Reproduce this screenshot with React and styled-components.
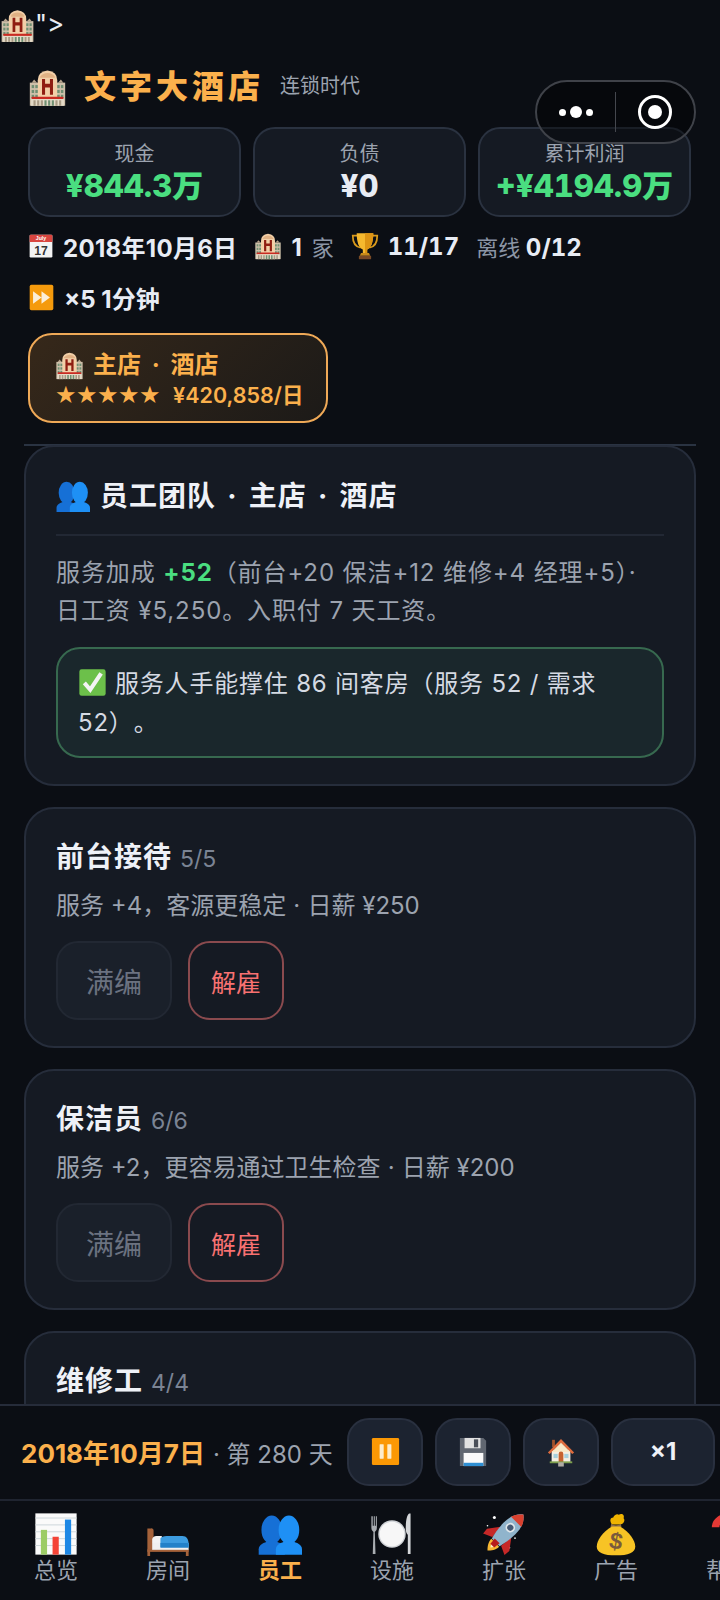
import React from "react";
import styled, { createGlobalStyle } from "styled-components";

const Global = createGlobalStyle`
  html, body { margin: 0; padding: 0; background: #0b0e14; }
  * { box-sizing: border-box; }
  body { font-family: Inter, "Noto Sans CJK SC", "Noto Sans", sans-serif; color: #e8ecf4; }
`;

const Page = styled.div`
  position: relative;
  width: 720px;
  height: 1600px;
  overflow: hidden;
  display: flex;
  flex-direction: column;
  background: #0b0e14;
`;
const Scroll = styled.main`
  flex: 1;
  min-height: 0;
  overflow: hidden;
`;
const Stray = styled.div`
  height: 46px;
  padding-top: 8px;
  display: flex;
  align-items: flex-start;
  font-size: 26px;
  line-height: 32px;
  color: #e8ecf4;
`;
const Header = styled.header`
  padding: 23px 28px 0;
`;
const TitleRow = styled.div`
  display: flex;
  align-items: center;
  height: 36px;
`;
const Title = styled.h1`
  margin: 0 0 0 17px;
  font-size: 32px;
  line-height: 36px;
  font-weight: 900;
  letter-spacing: 4px;
  color: #fbb04c;
`;
const Subtitle = styled.span`
  margin-left: 16px;
  font-size: 20px;
  color: #9ca3af;
  position: relative;
  top: -3px;
`;
const Stats = styled.div`
  display: grid;
  grid-template-columns: repeat(3, 213px);
  gap: 12px;
  margin-top: 22px;
`;
const Stat = styled.div`
  height: 90px;
  border: 2px solid #2a3240;
  border-radius: 22px;
  background: #151a23;
  display: flex;
  flex-direction: column;
  align-items: center;
  padding-top: 11px;
`;
const StatLabel = styled.div`
  font-size: 20px;
  line-height: 28px;
  color: #9ca3af;
`;
const StatValue = styled.div`
  font-size: 31px;
  line-height: 36px;
  font-weight: 800;
  font-variant-numeric: tabular-nums;
  white-space: nowrap;
  color: ${(p) => (p.$green ? "#4ade80" : "#e8ecf4")};
`;
const MetaRow = styled.div`
  display: flex;
  column-gap: 17px;
  margin-top: ${(p) => p.$top}px;
`;
const MetaItem = styled.div`
  display: flex;
  align-items: center;
  gap: 9px;
  height: 34px;
  font-size: 24px;
  font-weight: 700;
  white-space: nowrap;
  color: #e8ecf4;
`;
const MetaDate = styled.span`
  letter-spacing: 0.3px;
`;
const Muted = styled.span`
  margin-left: ${(p) => p.$left || 0}px;
  font-size: 22px;
  font-weight: 400;
  color: #8b95a5;
`;
const Tabular = styled.span`
  font-variant-numeric: tabular-nums;
`;
const Sep = styled.span`
  margin: 0 ${(p) => p.$m}em;
`;
const Chip = styled.button`
  display: block;
  width: 300px;
  height: 90px;
  margin-top: 19px;
  padding: 4px 0 0 25px;
  border: 2px solid #efa957;
  border-radius: 24px;
  background: linear-gradient(135deg, #36281a, #1c1a18);
  font-family: inherit;
  text-align: left;
  color: #fbb04c;
`;
const ChipTitle = styled.div`
  display: flex;
  align-items: center;
  gap: 9px;
  font-size: 24px;
  line-height: 30px;
  font-weight: 700;
`;
const ChipSub = styled.div`
  display: flex;
  align-items: center;
  gap: 13px;
  font-size: 21.5px;
  line-height: 30px;
  font-weight: 600;
`;
const Stars = styled.span`
  font-family: "DejaVu Sans", sans-serif;
  font-size: 24px;
  line-height: 30px;
  letter-spacing: -0.5px;
`;
const Divider = styled.div`
  height: 2px;
  margin: 21px 24px 0;
  background: #2a3342;
`;
const List = styled.div`
  display: flex;
  flex-direction: column;
  gap: 21px;
  margin: -1px 24px 0;
`;
const Panel = styled.section`
  border: 2px solid #262d3b;
  border-radius: 30px;
  background: #151a23;
  padding: 29px 30px 26px;
`;
const PanelTitle = styled.h2`
  margin: 0;
  padding-bottom: 18px;
  border-bottom: 2px solid #222834;
  display: flex;
  align-items: center;
  gap: 10px;
  font-size: 28px;
  line-height: 40px;
  font-weight: 700;
  letter-spacing: 1px;
  color: #eef1f7;
`;
const Summary = styled.p`
  margin: 18px 0 0;
  font-size: 24px;
  line-height: 38px;
  letter-spacing: 0.9px;
  color: #9ca3af;
`;
const Good = styled.b`
  font-weight: 700;
  color: #4ade80;
`;
const Notice = styled.div`
  margin-top: 17px;
  padding: 14.5px 20px;
  border: 2px solid #37694f;
  border-radius: 24px;
  background: #1a272c;
  font-size: 24px;
  line-height: 39px;
  letter-spacing: 0.8px;
  text-spacing-trim: space-all;
  color: #d5dae3;
`;
const NoticeIcon = styled.span`
  display: inline-block;
  vertical-align: -5px;
  margin-right: 8px;
  line-height: 0;
`;
const Card = styled.section`
  border: 2px solid #262d3b;
  border-radius: 30px;
  background: #151a23;
  padding: 28px 30px 26px;
  height: 241px;
  flex: none;
`;
const CardHead = styled.div`
  display: flex;
  align-items: baseline;
  gap: 8px;
  height: 40px;
`;
const CardName = styled.h3`
  margin: 0;
  font-size: 28px;
  line-height: 40px;
  font-weight: 700;
  letter-spacing: 1px;
  color: #eef1f7;
`;
const CardCount = styled.span`
  font-size: 23px;
  color: #7b8494;
`;
const CardDesc = styled.p`
  margin: 11px 0 0;
  font-size: 24px;
  line-height: 36px;
  color: #9ca3af;
`;
const Actions = styled.div`
  display: flex;
  gap: 16px;
  margin-top: 17px;
`;
const ActionButton = styled.button`
  height: 79px;
  width: ${(p) => (p.$danger ? "96px" : "116px")};
  border-radius: 22px;
  border: 2px solid ${(p) => (p.$danger ? "#8a4a4e" : "#222833")};
  background: ${(p) => (p.$danger ? "transparent" : "#1a202a")};
  color: ${(p) => (p.$danger ? "#f87171" : "#6b7280")};
  font-family: inherit;
  font-size: ${(p) => (p.$danger ? "25px" : "28px")};
  padding: 0;
`;
const Toolbar = styled.div`
  flex: none;
  height: 97px;
  border-top: 2px solid #262c3a;
  border-bottom: 2px solid #1f2430;
  background: #0b0e14;
  display: flex;
  align-items: center;
  padding: 0 0 2px 21px;
`;
const ToolInfo = styled.div`
  flex: 0 0 326px;
  display: flex;
  align-items: baseline;
  white-space: nowrap;
  font-size: 24px;
`;
const ToolDate = styled.span`
  font-size: 26px;
  font-weight: 700;
  color: #fbb04c;
`;
const ToolDay = styled.span`
  margin-left: 8px;
  color: #9ca3af;
`;
const ToolButton = styled.button`
  flex: none;
  width: ${(p) => (p.$wide ? "104px" : "76px")};
  height: 68px;
  margin-right: ${(p) => (p.$wide ? "0" : "12px")};
  border: 2px solid #29303f;
  border-radius: 22px;
  background: #1c2330;
  color: #eef1f7;
  font-family: inherit;
  font-size: 24px;
  font-weight: 700;
  padding: 0;
  display: flex;
  align-items: center;
  justify-content: center;
`;
const Tabs = styled.nav`
  flex: none;
  height: 99px;
  display: flex;
  overflow: hidden;
  background: #0b0e14;
`;
const Tab = styled.div`
  flex: 0 0 112px;
  display: flex;
  flex-direction: column;
  align-items: center;
  padding-top: 11px;
  font-size: 22px;
  line-height: 28px;
  font-weight: ${(p) => (p.$active ? 700 : 400)};
  color: ${(p) => (p.$active ? "#fbb04c" : "#9ca3af")};
`;
const TabIcon = styled.div`
  height: 44px;
  display: flex;
  align-items: flex-end;
  justify-content: center;
`;
const Capsule = styled.div`
  position: absolute;
  left: 535px;
  top: 80px;
  width: 161px;
  height: 64px;
  border: 2px solid #3f4249;
  border-radius: 32px;
  background: rgba(0, 0, 0, 0.4);
  display: flex;
  align-items: center;
`;
const CapsuleSide = styled.div`
  flex: 1;
  display: flex;
  align-items: center;
  justify-content: center;
`;
const CapsuleLine = styled.div`
  width: 1px;
  height: 40px;
  background: #44474e;
`;
const Dot = styled.i`
  display: block;
  width: ${(p) => p.$s}px;
  height: ${(p) => p.$s}px;
  margin: 0 2px;
  border-radius: 50%;
  background: #fff;
`;
const Ring = styled.div`
  width: 34px;
  height: 34px;
  border: 3.5px solid #fff;
  border-radius: 50%;
  display: flex;
  align-items: center;
  justify-content: center;
  &::after {
    content: "";
    width: 14px;
    height: 14px;
    border-radius: 50%;
    background: #fff;
  }
`;
const Svg = styled.svg`
  display: block;
  flex: none;
`;

const Icon = ({ w = 24, h, children, vb = "0 0 64 64" }) => (
  <Svg width={w} height={h || w} viewBox={vb}>
    {children}
  </Svg>
);

const Hotel = (p) => (
  <Icon {...p}>
    <rect x="3" y="24" width="15" height="38" fill="#cdbfa9" />
    <rect x="46" y="24" width="15" height="38" fill="#cdbfa9" />
    <path d="M6 24 L10 19 L15 24Z M49 24 L54 19 L58 24Z" fill="#b9a68e" />
    <path d="M16 20 Q16 6 32 4 Q48 6 48 20 V62 H16Z" fill="#f2cfa8" />
    <path d="M20 14 Q24 8 32 8 Q40 8 44 14 V16 H20Z" fill="#e0b184" />
    {[6, 12].map((x) =>
      [28, 36, 44].map((y) => <rect key={x + "a" + y} x={x} y={y} width="4" height="5" fill="#6f8f72" />)
    )}
    {[48, 54].map((x) =>
      [28, 36, 44].map((y) => <rect key={x + "b" + y} x={x} y={y} width="4" height="5" fill="#6f8f72" />)
    )}
    <path d="M23 18h5v8h8v-8h5v26h-5V32h-8v12h-5Z" fill="#8f1d12" />
    <rect x="6" y="47" width="52" height="4" rx="1" fill="#c92a22" />
    <rect x="5" y="51" width="54" height="11" fill="#e4dac8" />
    {[9, 15, 21, 27, 33, 39, 45, 51].map((x) => (
      <rect key={x} x={x} y="53" width="3.5" height="9" fill={x > 24 && x < 40 ? "#6f8f72" : "#a89a84"} />
    ))}
  </Icon>
);
const Calendar = (p) => (
  <Icon {...p}>
    <rect x="4" y="4" width="56" height="56" rx="3" fill="#f3f3f3" />
    <path d="M4 7a3 3 0 0 1 3-3h50a3 3 0 0 1 3 3v15H4Z" fill="#d9453f" />
    <text x="32" y="18" textAnchor="middle" fontSize="13" fill="#fff" fontFamily="Liberation Sans">July</text>
    <text x="32" y="53" textAnchor="middle" fontSize="30" fill="#333" fontFamily="Liberation Sans">17</text>
  </Icon>
);
const Trophy = (p) => (
  <Icon {...p}>
    <path d="M14 8H4c0 16 6 26 18 28M50 8h10c0 16-6 26-18 28" fill="none" stroke="#d99a1c" strokeWidth="4" />
    <path d="M13 3h38c0 20-5 34-14 37v8h-10v-8C18 37 13 23 13 3Z" fill="#f5b82e" />
    <path d="M32 3h19c0 20-5 34-14 37v8h-5Z" fill="#dd9414" />
    <path d="M23 48h18l3 6H20Z" fill="#c98a1a" />
    <rect x="18" y="54" width="28" height="8" rx="1" fill="#7a4a26" />
  </Icon>
);
const FastForward = (p) => (
  <Icon {...p}>
    <rect x="4" y="2" width="56" height="60" rx="4" fill="#f59a0c" />
    <path d="M12 17l20 15-20 15Z M32 17l20 15-20 15Z" fill="#fbeed8" />
  </Icon>
);
const People = (p) => (
  <Icon {...p}>
    <ellipse cx="20" cy="26" rx="15" ry="21" fill="#1670d6" />
    <path d="M1 62V54c0-6 8-10 14-11h10c6 1 14 5 14 11v8Z" fill="#1670d6" />
    <ellipse cx="45" cy="26" rx="15" ry="21" fill="#1e90f5" />
    <path d="M26 62V54c0-6 8-10 14-11h10c6 1 14 5 14 11v8Z" fill="#1e90f5" />
  </Icon>
);
const Check = (p) => (
  <Icon {...p}>
    <rect x="3" y="3" width="58" height="58" rx="5" fill="#6cc04a" />
    <path d="M14 33l13 15L51 12" fill="none" stroke="#f4f4f4" strokeWidth="9" />
  </Icon>
);
const Pause = (p) => (
  <Icon {...p}>
    <rect x="2" y="2" width="60" height="60" rx="3" fill="#fb9804" />
    <rect x="19" y="16" width="9" height="32" rx="1" fill="#fdeccb" />
    <rect x="36" y="16" width="9" height="32" rx="1" fill="#fdeccb" />
  </Icon>
);
const Floppy = (p) => (
  <Icon {...p}>
    <path d="M4 2h50l6 6v54H4Z" fill="#616771" />
    <rect x="14" y="2" width="34" height="22" fill="#e2e2e2" />
    <rect x="34" y="5" width="9" height="17" fill="#4a4f58" />
    <rect x="12" y="34" width="42" height="28" fill="#fafafa" />
    <rect x="12" y="55" width="42" height="7" fill="#2f8fd3" />
  </Icon>
);
const House = (p) => (
  <Icon {...p}>
    <rect x="13" y="6" width="6" height="16" fill="#a0522d" />
    <rect x="12" y="28" width="40" height="26" fill="#f5efe2" />
    <path d="M32 4L4 33l4 3 24-22 24 22 4-3Z" fill="#dd6b3d" />
    <path d="M32 12L12 32h40Z" fill="#f9e9c8" />
    <rect x="16" y="36" width="9" height="9" fill="#a7d0dc" />
    <rect x="39" y="36" width="9" height="9" fill="#a7d0dc" />
    <path d="M27 54V36a5 5 0 0 1 10 0v18Z" fill="#c6622f" />
    <rect x="8" y="52" width="48" height="4" fill="#7ea04d" />
    <rect x="26" y="54" width="12" height="9" fill="#b0aba3" />
  </Icon>
);
const Chart = (p) => (
  <Icon {...p}>
    <rect x="2" y="2" width="60" height="60" fill="#fafafa" />
    {[8, 18, 28, 38, 48].map((y) => (
      <rect key={y} x="2" y={y} width="60" height="1.5" fill="#cfd8dc" />
    ))}
    <rect x="10" y="26" width="9" height="36" fill="#9ccc65" />
    <rect x="27" y="36" width="9" height="26" fill="#f44336" />
    <rect x="45" y="11" width="9" height="51" fill="#1e88e5" />
  </Icon>
);
const Bed = (p) => (
  <Icon {...p}>
    <path d="M2 24h5a3 3 0 0 1 4 3v28H2Z" fill="#a5623a" />
    <rect x="2" y="54" width="60" height="4" fill="#a5623a" />
    <rect x="2" y="55" width="4" height="9" fill="#a5623a" />
    <rect x="58" y="55" width="4" height="9" fill="#a5623a" />
    <path d="M9 40c0-3 3-5 6-5h8v10H9Z" fill="#f3f3f3" />
    <rect x="9" y="45" width="53" height="10" fill="#f0f0f0" />
    <path d="M21 38c4-3 8-3 12-3h20c6 0 9 5 9 12v4H21Z" fill="#3d9ce0" />
    <rect x="21" y="45" width="41" height="7" fill="#2381c9" />
  </Icon>
);
const Plate = (p) => (
  <Icon {...p}>
    <path d="M2 6v17c0 4 2 5 3 6l-1 32h4l-1-32c1-1 3-2 3-6V6H8.500v14H7V6H5.500v14H4V6Z" fill="#a9adb2" />
    <circle cx="32" cy="32" r="20" fill="#cfd2d6" />
    <circle cx="32" cy="32" r="18" fill="#f7f7f7" />
    <path d="M57 2c-3 2-5 9-5 22 0 6 2 8 3 9v28h4V2Z" fill="#d5d7da" />
  </Icon>
);
const Rocket = (p) => (
  <Icon {...p}>
    <circle cx="18" cy="8" r="2.200" fill="#fff" />
    <circle cx="8" cy="20" r="1.200" fill="#fff" />
    <circle cx="40" cy="52" r="1.200" fill="#fff" />
    <circle cx="48" cy="38" r="1.200" fill="#fff" />
    <g transform="rotate(45 32 32)">
      <path d="M24 50c0 7 4 12 8 16 4-4 8-9 8-16Z" fill="#f7b733" />
      <path d="M28 50c0 4 2 7 4 10 2-3 4-6 4-10Z" fill="#fff3c4" />
      <path d="M21 28L9 44l1 9 13-6ZM43 28l12 16-1 9-13-6Z" fill="#c62828" />
      <path d="M32-8c-8 6-12 16-12 28 0 12 2 22 4 29h16c2-7 4-17 4-29 0-12-4-22-12-28Z" fill="#90b4cc" />
      <path d="M32-8c-5 4-9 9-10.500 15h21C41 1 37-4 32-8Z" fill="#d9412f" />
      <path d="M27 46h10l-1 10h-8Z" fill="#b71c1c" />
      <circle cx="32" cy="19" r="7" fill="#e0e6ea" />
      <circle cx="32" cy="19" r="4.500" fill="#455a75" />
    </g>
  </Icon>
);
const Bag = (p) => (
  <Icon {...p}>
    <path d="M26 18c-4-6-2-10 2-10 1-4 6-6 8-4 5-3 9 1 7 5 3 3 0 9-5 9Z" fill="#f0b400" />
    <path d="M25 17c4 3 10 3 14 0l1 5H24Z" fill="#8d6e4a" />
    <path d="M26 21C12 29 4 42 4 50c0 9 10 13 28 13s28-4 28-13c0-8-8-21-22-29Z" fill="#f7c325" />
    <text x="32" y="54" textAnchor="middle" fontSize="34" fontWeight="700" fill="#7a5a3c" fontFamily="Liberation Sans" transform="rotate(10 32 42)">$</text>
  </Icon>
);
const Question = (p) => (
  <Icon {...p}>
    <path d="M14 22C14 4 50 2 50 22c0 14-18 14-18 28" fill="none" stroke="#e53935" strokeWidth="11" />
  </Icon>
);

const StaffCard = ({ name, count, desc, pay }) => (
  <Card>
    <CardHead>
      <CardName>{name}</CardName>
      <CardCount>{count}</CardCount>
    </CardHead>
    {desc && (
      <>
        <CardDesc>
          {desc}
          <Sep $m={0.3}>·</Sep>
          {pay}
        </CardDesc>
        <Actions>
          <ActionButton disabled>满编</ActionButton>
          <ActionButton $danger>解雇</ActionButton>
        </Actions>
      </>
    )}
  </Card>
);

const tabs = [
  ["总览", <Chart w={44} key="a" />],
  ["房间", <Bed w={44} key="b" />],
  ["员工", <People w={44} key="c" />],
  ["设施", <Plate w={44} key="d" />],
  ["扩张", <Rocket w={44} key="e" />],
  ["广告", <Bag w={44} key="f" />],
  ["帮助", <Question w={44} key="g" />],
];

export default function App() {
  return (
    <Page>
      <Global />
      <Scroll>
        <Stray>
          <Hotel w={35} />
          "&gt;
        </Stray>
        <Header>
          <TitleRow>
            <Hotel w={39} />
            <Title>文字大酒店</Title>
            <Subtitle>连锁时代</Subtitle>
          </TitleRow>
          <Stats>
            <Stat>
              <StatLabel>现金</StatLabel>
              <StatValue $green>¥844.3万</StatValue>
            </Stat>
            <Stat>
              <StatLabel>负债</StatLabel>
              <StatValue>¥0</StatValue>
            </Stat>
            <Stat>
              <StatLabel>累计利润</StatLabel>
              <StatValue $green>+¥4194.9万</StatValue>
            </Stat>
          </Stats>
          <MetaRow $top={12}>
            <MetaItem>
              <Calendar w={26} />
              <MetaDate>2018年10月6日</MetaDate>
            </MetaItem>
            <MetaItem>
              <Hotel w={28} />
              <span>
                1<Muted $left={10}>家</Muted>
              </span>
            </MetaItem>
            <MetaItem>
              <Trophy w={28} />
              <Tabular>11/17</Tabular>
            </MetaItem>
            <MetaItem>
              <span>
                <Muted>离线</Muted> <Tabular>0/12</Tabular>
              </span>
            </MetaItem>
          </MetaRow>
          <MetaRow $top={17}>
            <MetaItem>
              <FastForward w={27} />
              <span>×5 1分钟</span>
            </MetaItem>
          </MetaRow>
          <Chip>
            <ChipTitle>
              <Hotel w={29} />
              <span>
                主店<Sep $m={0.45}>·</Sep>酒店
              </span>
            </ChipTitle>
            <ChipSub>
              <Stars>★★★★★</Stars>
              ¥420,858/日
            </ChipSub>
          </Chip>
        </Header>
        <Divider />
        <List>
          <Panel>
            <PanelTitle>
              <People w={34} />
              <span>
                员工团队<Sep $m={0.4}>·</Sep>主店<Sep $m={0.4}>·</Sep>酒店
              </span>
            </PanelTitle>
            <Summary>
              服务加成 <Good>+52</Good>（前台+20 保洁+12 维修+4 经理+5）·
              <br />
              日工资 ¥5,250。入职付 7 天工资。
            </Summary>
            <Notice>
              <NoticeIcon>
                <Check w={29} />
              </NoticeIcon>
              服务人手能撑住 86 间客房（服务 52 / 需求 52）。
            </Notice>
          </Panel>
          <StaffCard name="前台接待" count="5/5" desc="服务 +4，客源更稳定" pay="日薪 ¥250" />
          <StaffCard name="保洁员" count="6/6" desc="服务 +2，更容易通过卫生检查" pay="日薪 ¥200" />
          <StaffCard name="维修工" count="4/4" />
        </List>
      </Scroll>
      <Toolbar>
        <ToolInfo>
          <ToolDate>2018年10月7日</ToolDate>
          <ToolDay>· 第 280 天</ToolDay>
        </ToolInfo>
        <ToolButton>
          <Pause w={29} />
        </ToolButton>
        <ToolButton>
          <Floppy w={30} />
        </ToolButton>
        <ToolButton>
          <House w={30} />
        </ToolButton>
        <ToolButton $wide>×1</ToolButton>
      </Toolbar>
      <Tabs>
        {tabs.map(([label, icon]) => (
          <Tab key={label} $active={label === "员工"}>
            <TabIcon>{icon}</TabIcon>
            {label}
          </Tab>
        ))}
      </Tabs>
      <Capsule>
        <CapsuleSide>
          <Dot $s={7} />
          <Dot $s={12} />
          <Dot $s={7} />
        </CapsuleSide>
        <CapsuleLine />
        <CapsuleSide>
          <Ring />
        </CapsuleSide>
      </Capsule>
    </Page>
  );
}
